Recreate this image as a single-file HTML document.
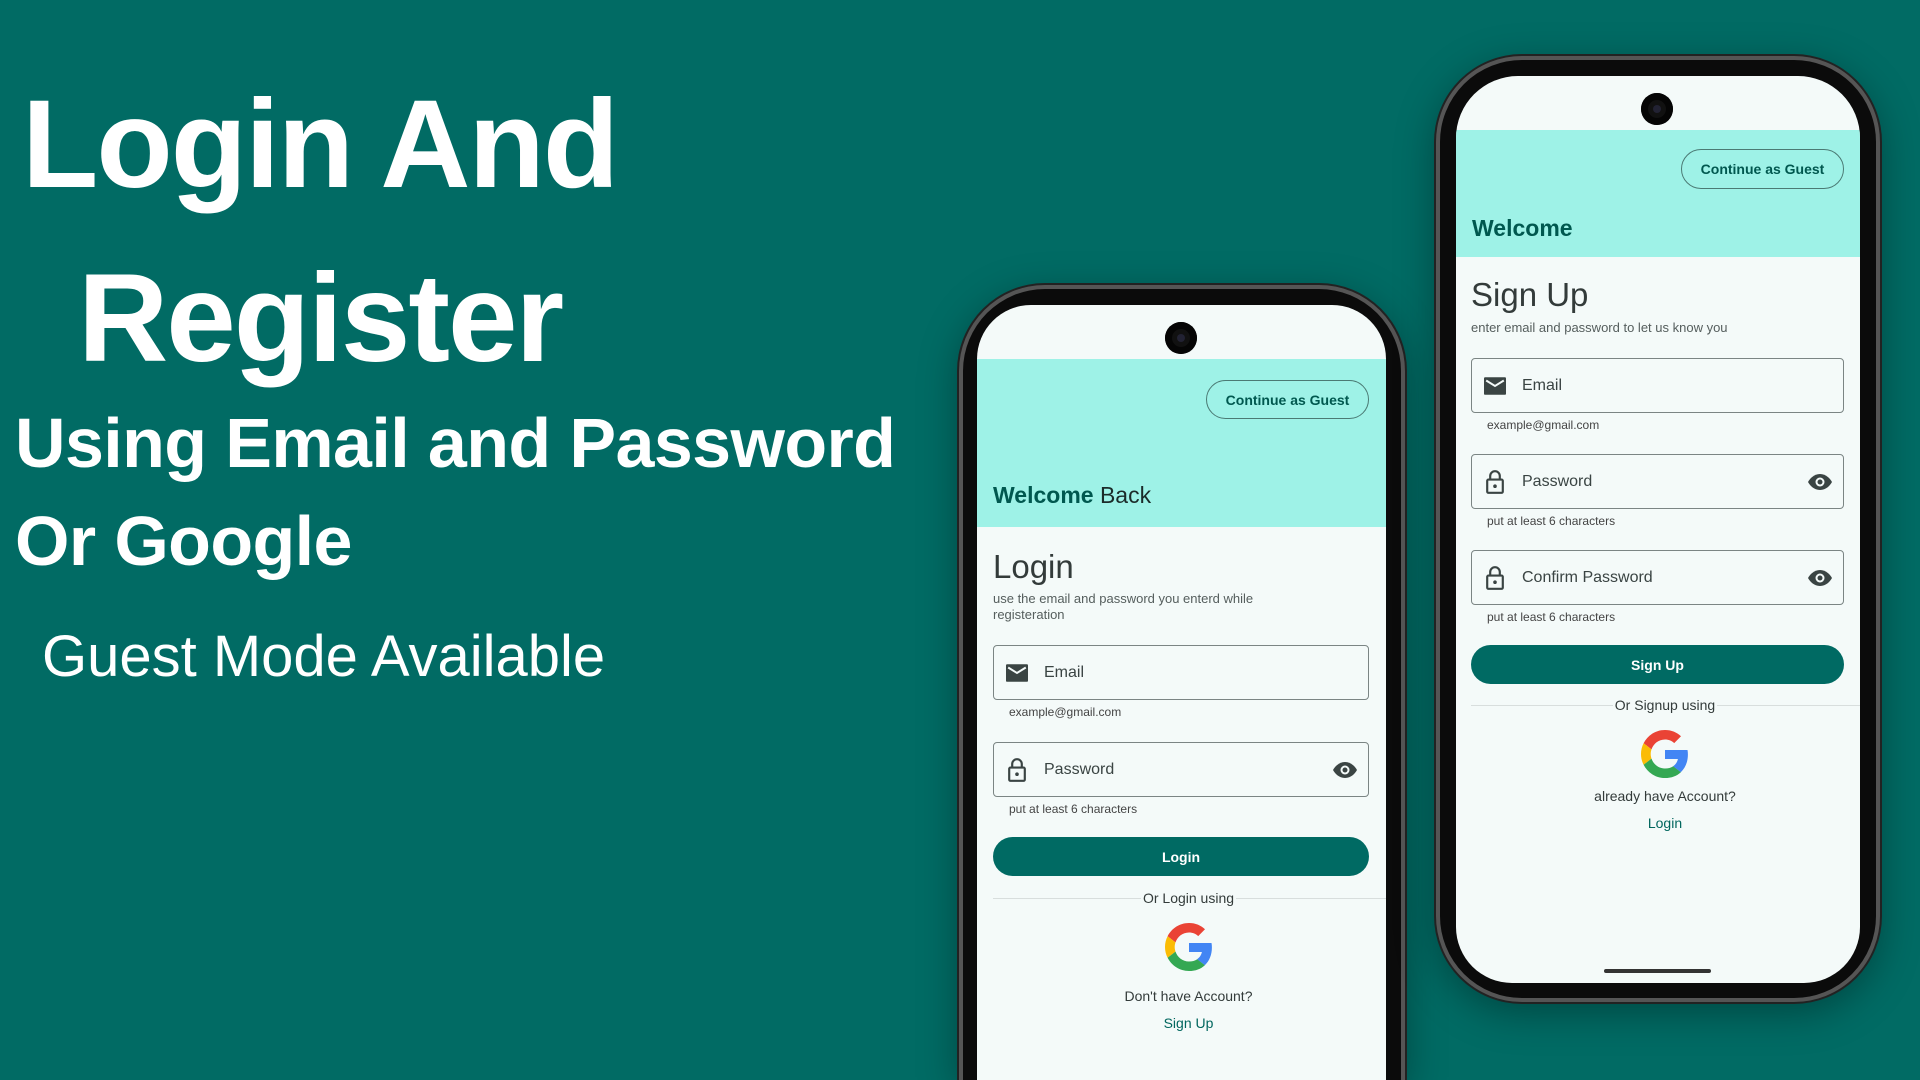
<!DOCTYPE html>
<html><head><meta charset="utf-8"><style>
*{margin:0;padding:0;box-sizing:border-box}
html,body{width:1920px;height:1080px;overflow:hidden}
body{background:#016b64;font-family:"Liberation Sans",sans-serif;position:relative}
#w{position:absolute;left:0;top:0;width:1920px;height:1080px;overflow:hidden}
.h{position:absolute;color:#fff;font-weight:bold;white-space:nowrap;line-height:1}
.phone{position:absolute;border-radius:86px;background:#0b0b0b;border:4px solid #555;box-shadow:0 0 0 2px #222,0 10px 40px rgba(0,0,0,.35)}
.scr{position:absolute;background:#f4faf9;overflow:hidden;border-radius:62px 62px 56px 56px}
.cam{position:absolute;width:32px;height:32px;border-radius:50%;background:#111;box-shadow:inset 0 0 0 7px #050505}
.cam::after{content:"";position:absolute;left:12px;top:12px;width:8px;height:8px;border-radius:50%;background:#223}
.hdr{position:absolute;left:0;right:0;background:#9ef2e7}
.guest{position:absolute;border:1.5px solid #4b7a74;border-radius:24px;color:#00584f;font-size:14px;font-weight:bold;display:flex;align-items:center;justify-content:center}
.wel{position:absolute;font-size:23px;color:#00584f;font-weight:bold}
.wel span{font-weight:normal;color:#1b2b29}
.t{position:absolute;color:#333b3a;white-space:nowrap}
.fld{position:absolute;border:1.5px solid #7b8584;border-radius:4px;display:flex;align-items:center;font-size:16px;color:#3a4443}
.fld svg{margin-left:12px;margin-right:16px}
.fld svg.eye{position:absolute;right:11px;top:50%;margin:-9px 0 0 0}
.btn{position:absolute;background:#006a63;color:#fff;font-weight:bold;font-size:14px;border-radius:20px;display:flex;align-items:center;justify-content:center}
.line{position:absolute;height:1px;background:#d8dedd}
.c{text-align:center}
</style></head><body><div id="w">

<div class="h" style="left:22px;top:82px;font-size:125px;letter-spacing:-2px">Login And</div>
<div class="h" style="left:78px;top:256px;font-size:125px;letter-spacing:-2px">Register</div>
<div class="h" style="left:15px;top:408px;font-size:70px;letter-spacing:-0.6px">Using Email and Password</div>
<div class="h" style="left:15px;top:506px;font-size:70px;letter-spacing:-0.6px">Or Google</div>
<div class="h" style="left:42px;top:628px;font-size:58px;font-weight:normal;letter-spacing:0">Guest Mode Available</div>

<!-- phone 1 -->
<div class="phone" style="left:959px;top:285px;width:446px;height:795px;border-bottom:none;border-radius:86px 86px 0 0"></div>
<div class="scr" style="left:977px;top:305px;width:409px;height:775px;border-radius:54px 54px 0 0">
  <div class="cam" style="left:188px;top:17px"></div>
  <div class="hdr" style="top:54px;height:168px"></div>
  <div class="guest" style="left:229px;top:75px;width:163px;height:39px">Continue as Guest</div>
  <div class="wel" style="left:16px;top:177px">Welcome <span>Back</span></div>
  <div class="t" style="left:16px;top:243px;font-size:33px">Login</div>
  <div class="t" style="left:16px;top:286px;font-size:13px;color:#555e5d;line-height:16px">use the email and password you enterd while<br>registeration</div>
  <div class="fld" style="left:16px;top:340px;width:376px;height:55px"><svg width="22" height="18" viewBox="0 0 20 16"><path d="M0 1a1 1 0 011-1h18a1 1 0 011 1v14a1 1 0 01-1 1H1a1 1 0 01-1-1z" fill="#3a4443"/><path d="M2 3l8 5 8-5" stroke="#f4faf9" stroke-width="1.8" fill="none"/></svg>Email</div>
  <div class="t" style="left:32px;top:400px;font-size:12px;color:#444">example@gmail.com</div>
  <div class="fld" style="left:16px;top:437px;width:376px;height:55px"><svg width="22" height="24" viewBox="0 0 16 20"><rect x="1.5" y="8" width="13" height="11" rx="1" fill="none" stroke="#3a4443" stroke-width="1.8"/><path d="M4 8V5a4 4 0 018 0v3" fill="none" stroke="#3a4443" stroke-width="1.8"/><circle cx="8" cy="13.5" r="1.5" fill="#3a4443"/></svg>Password
    <svg class="eye" width="24" height="18" viewBox="0 0 24 16"><path d="M12 0C6 0 2 4.5 0 8c2 3.5 6 8 12 8s10-4.5 12-8C22 4.5 18 0 12 0z" fill="#3a4443"/><circle cx="12" cy="8" r="4.5" fill="#f4faf9"/><circle cx="12" cy="8" r="2.5" fill="#3a4443"/></svg></div>
  <div class="t" style="left:32px;top:497px;font-size:12px;color:#444">put at least 6 characters</div>
  <div class="btn" style="left:16px;top:532px;width:376px;height:39px">Login</div>
  <div class="line" style="left:16px;top:593px;width:393px"></div>
  <div class="t c" style="left:0;width:409px;top:585px;font-size:14px"><span style="background:#f4faf9;padding:0 2px;margin-left:14px">Or Login using</span></div>
  <svg style="position:absolute;left:188px;top:618px" width="48" height="48" viewBox="0 0 48 48"><path fill="#EA4335" d="M24 9.5c3.5 0 6.7 1.2 9.2 3.6l6.8-6.8C35.9 2.4 30.5 0 24 0 14.6 0 6.6 5.4 2.6 13.2l7.9 6.2C12.4 13.7 17.7 9.5 24 9.5z"/><path fill="#4285F4" d="M46.9 24.5c0-1.6-.1-3.1-.4-4.5H24v9h12.9c-.6 3-2.3 5.5-4.8 7.2l7.7 6c4.5-4.2 7.1-10.3 7.1-17.7z"/><path fill="#FBBC05" d="M10.5 28.6c-.5-1.4-.8-3-.8-4.6s.3-3.2.8-4.6l-7.9-6.2C.9 16.5 0 20.1 0 24s.9 7.5 2.6 10.8l7.9-6.2z"/><path fill="#34A853" d="M24 48c6.5 0 11.9-2.1 15.9-5.8l-7.7-6c-2.2 1.5-5 2.3-8.2 2.3-6.3 0-11.6-4.2-13.5-9.9l-7.9 6.2C6.6 42.6 14.6 48 24 48z"/></svg>
  <div class="t c" style="left:0;width:409px;top:683px;font-size:14px;padding-left:14px">Don't have Account?</div>
  <div class="t c" style="left:0;width:409px;top:710px;font-size:14px;color:#00665e;padding-left:14px">Sign Up</div>
</div>

<!-- phone 2 -->
<div class="phone" style="left:1436px;top:56px;width:444px;height:946px"></div>
<div class="scr" style="left:1456px;top:76px;width:404px;height:907px">
  <div class="cam" style="left:185px;top:17px"></div>
  <div class="hdr" style="top:54px;height:127px"></div>
  <div class="guest" style="left:225px;top:73px;width:163px;height:40px">Continue as Guest</div>
  <div class="wel" style="left:16px;top:139px">Welcome</div>
  <div class="t" style="left:15px;top:200px;font-size:33px">Sign Up</div>
  <div class="t" style="left:15px;top:244px;font-size:13px;color:#555e5d">enter email and password to let us know you</div>
  <div class="fld" style="left:15px;top:282px;width:373px;height:55px"><svg width="22" height="18" viewBox="0 0 20 16"><path d="M0 1a1 1 0 011-1h18a1 1 0 011 1v14a1 1 0 01-1 1H1a1 1 0 01-1-1z" fill="#3a4443"/><path d="M2 3l8 5 8-5" stroke="#f4faf9" stroke-width="1.8" fill="none"/></svg>Email</div>
  <div class="t" style="left:31px;top:342px;font-size:12px;color:#444">example@gmail.com</div>
  <div class="fld" style="left:15px;top:378px;width:373px;height:55px"><svg width="22" height="24" viewBox="0 0 16 20"><rect x="1.5" y="8" width="13" height="11" rx="1" fill="none" stroke="#3a4443" stroke-width="1.8"/><path d="M4 8V5a4 4 0 018 0v3" fill="none" stroke="#3a4443" stroke-width="1.8"/><circle cx="8" cy="13.5" r="1.5" fill="#3a4443"/></svg>Password
    <svg class="eye" width="24" height="18" viewBox="0 0 24 16"><path d="M12 0C6 0 2 4.5 0 8c2 3.5 6 8 12 8s10-4.5 12-8C22 4.5 18 0 12 0z" fill="#3a4443"/><circle cx="12" cy="8" r="4.5" fill="#f4faf9"/><circle cx="12" cy="8" r="2.5" fill="#3a4443"/></svg></div>
  <div class="t" style="left:31px;top:438px;font-size:12px;color:#444">put at least 6 characters</div>
  <div class="fld" style="left:15px;top:474px;width:373px;height:55px"><svg width="22" height="24" viewBox="0 0 16 20"><rect x="1.5" y="8" width="13" height="11" rx="1" fill="none" stroke="#3a4443" stroke-width="1.8"/><path d="M4 8V5a4 4 0 018 0v3" fill="none" stroke="#3a4443" stroke-width="1.8"/><circle cx="8" cy="13.5" r="1.5" fill="#3a4443"/></svg>Confirm Password
    <svg class="eye" width="24" height="18" viewBox="0 0 24 16"><path d="M12 0C6 0 2 4.5 0 8c2 3.5 6 8 12 8s10-4.5 12-8C22 4.5 18 0 12 0z" fill="#3a4443"/><circle cx="12" cy="8" r="4.5" fill="#f4faf9"/><circle cx="12" cy="8" r="2.5" fill="#3a4443"/></svg></div>
  <div class="t" style="left:31px;top:534px;font-size:12px;color:#444">put at least 6 characters</div>
  <div class="btn" style="left:15px;top:569px;width:373px;height:39px">Sign Up</div>
  <div class="line" style="left:15px;top:629px;width:389px"></div>
  <div class="t c" style="left:0;width:404px;top:621px;font-size:14px"><span style="background:#f4faf9;padding:0 2px;margin-left:14px">Or Signup using</span></div>
  <svg style="position:absolute;left:185px;top:654px" width="48" height="48" viewBox="0 0 48 48"><path fill="#EA4335" d="M24 9.5c3.5 0 6.7 1.2 9.2 3.6l6.8-6.8C35.9 2.4 30.5 0 24 0 14.6 0 6.6 5.4 2.6 13.2l7.9 6.2C12.4 13.7 17.7 9.5 24 9.5z"/><path fill="#4285F4" d="M46.9 24.5c0-1.6-.1-3.1-.4-4.5H24v9h12.9c-.6 3-2.3 5.5-4.8 7.2l7.7 6c4.5-4.2 7.1-10.3 7.1-17.7z"/><path fill="#FBBC05" d="M10.5 28.6c-.5-1.4-.8-3-.8-4.6s.3-3.2.8-4.6l-7.9-6.2C.9 16.5 0 20.1 0 24s.9 7.5 2.6 10.8l7.9-6.2z"/><path fill="#34A853" d="M24 48c6.5 0 11.9-2.1 15.9-5.8l-7.7-6c-2.2 1.5-5 2.3-8.2 2.3-6.3 0-11.6-4.2-13.5-9.9l-7.9 6.2C6.6 42.6 14.6 48 24 48z"/></svg>
  <div class="t c" style="left:0;width:404px;top:712px;font-size:14px;padding-left:14px">already have Account?</div>
  <div class="t c" style="left:0;width:404px;top:739px;font-size:14px;color:#00665e;padding-left:14px">Login</div>
  <div style="position:absolute;left:148px;top:893px;width:107px;height:4px;border-radius:2px;background:#333"></div>
</div>
</div></body></html>
